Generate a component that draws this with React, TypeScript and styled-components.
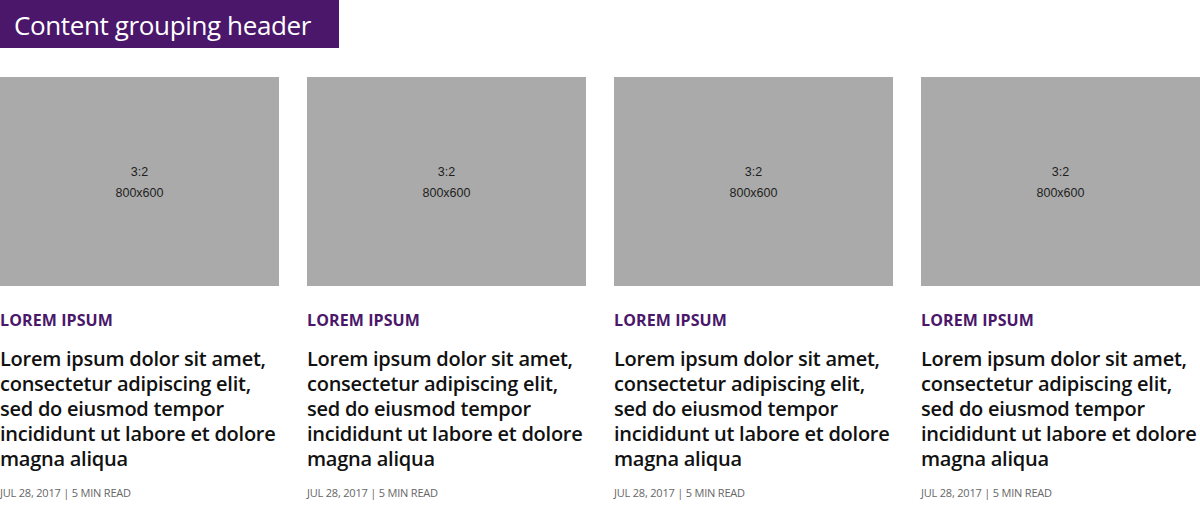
import React from "react";
import styled, { createGlobalStyle } from "styled-components";

const Global = createGlobalStyle`
  html, body { margin: 0; padding: 0; background: #ffffff; }
  body { font-family: "Open Sans", "Liberation Sans", sans-serif; }
`;

const Page = styled.div`
  width: 1200px;
  display: flex;
  flex-direction: column;
  gap: 29px;
`;

const Header = styled.h2`
  margin: 0;
  align-self: flex-start;
  width: 339px;
  height: 48px;
  box-sizing: border-box;
  padding: 2px 0 0 14px;
  display: flex;
  align-items: center;
  background: #4a176a;
  color: #ffffff;
  font-family: "Open Sans", sans-serif;
  font-weight: 400;
  font-size: 26px;
  letter-spacing: -0.37px;
`;

const Grid = styled.div`
  display: grid;
  grid-template-columns: repeat(4, 279px);
  column-gap: 28px;
`;

const Card = styled.article`
  display: flex;
  flex-direction: column;
`;

const Placeholder = styled.div`
  height: 209px;
  background: #aaaaaa;
  display: flex;
  flex-direction: column;
  align-items: center;
  justify-content: center;
  gap: 6px;
  font-family: "Liberation Sans", Arial, sans-serif;
  font-size: 12.5px;
  line-height: 15px;
  color: #1e1e1e;
  padding-top: 2px;
  box-sizing: border-box;
`;

const Category = styled.div`
  margin-top: 24px;
  color: #4a176a;
  font-weight: 700;
  font-size: 16px;
  line-height: 20px;
  letter-spacing: 0.1px;
`;

const Title = styled.h3`
  margin: 16px 0 0 0;
  color: #111111;
  font-weight: 600;
  font-size: 20px;
  line-height: 25px;
  letter-spacing: -0.25px;
`;

const Meta = styled.div`
  margin-top: 15px;
  color: #666666;
  font-size: 11px;
  line-height: 14px;
  letter-spacing: -0.2px;
`;

const cards = [0, 1, 2, 3];

export default function App() {
  return (
    <>
      <Global />
      <Page>
        <Header>Content grouping header</Header>
        <Grid>
          {cards.map((i) => (
            <Card key={i}>
              <Placeholder>
                <span>3:2</span>
                <span>800x600</span>
              </Placeholder>
              <Category>LOREM IPSUM</Category>
              <Title>
                Lorem ipsum dolor sit amet, consectetur adipiscing elit, sed do eiusmod tempor incididunt ut labore et dolore magna aliqua
              </Title>
              <Meta>JUL 28, 2017 | 5 MIN READ</Meta>
            </Card>
          ))}
        </Grid>
      </Page>
    </>
  );
}
